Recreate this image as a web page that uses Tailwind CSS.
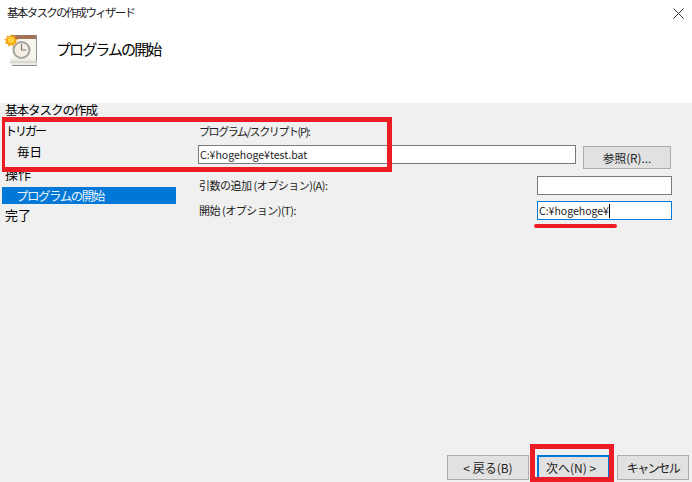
<!DOCTYPE html>
<html lang="ja">
<head>
    <meta charset="UTF-8">
    <title>基本タスクの作成ウィザード</title>
    <script src="https://cdn.jsdelivr.net/npm/@tailwindcss/browser@4"></script>
</head>
<body class="bg-[#f0f0f0] text-black font-['Noto_Sans_CJK_JP','Liberation_Sans',sans-serif]">
<div class="relative w-[692px] h-[482px] overflow-hidden flex flex-col">

    <!-- Header -->
    <header class="bg-white h-[103px] shrink-0">
        <div class="flex justify-between items-center h-[26px] pl-[7px] pr-[8px] text-[11.500px] tracking-[-1.700px] text-[#222]">
            <span>基本タスクの作成ウィザード</span>
            <svg class="w-[11px] h-[11px]" viewBox="0 0 11 11" stroke="#333" fill="none"><path d="M.5.5l10 10M10.5.5l-10 10"/></svg>
        </div>
        <div class="flex items-center pl-[4px] mt-[4px]">
            <!-- task icon: calendar page, clock, sun -->
            <svg class="w-[34px] h-[36px]" viewBox="0 0 34 36">
                <path d="M8 5h25v31H8z" fill="#8f8f8f"/>
                <path d="M6 29h26l1 6H6z" fill="#ecebe4"/>
                <path d="M6 32h26" stroke="#c4c4bc"/>
                <rect x="8" y="5" width="24" height="24" fill="#f8f5ea"/>
                <rect x="8" y="5" width="24" height="4" fill="#a0735a"/>
                <circle cx="17.500" cy="20" r="8" fill="#f5efe2" stroke="#a3a3a3" stroke-width="2"/>
                <path d="M17.500 14v6h5" fill="none" stroke="#7a7a7a" stroke-width="1.200"/>
                <path d="M7 4l1.600 2.500 2.900-1.200-.4 3.100 3 .8-2.400 2 1.500 2.700-3.100-.1-.7 3-2.400-2-2.400 2-.7-3-3.100.1 1.500-2.700-2.400-2 3-.8-.4-3.100 2.900 1.200z" fill="#f5a316"/>
                <circle cx="7" cy="10" r="3.200" fill="#ffd23c"/>
            </svg>
            <h1 class="ml-[18px] text-[15px] tracking-[-1.900px] leading-[22px] relative top-[1px]">プログラムの開始</h1>
        </div>
    </header>

    <!-- Body -->
    <main class="flex flex-1 min-h-0 text-[12.500px]">
        <nav class="w-[198px] shrink-0">
            <p class="pl-[5px] h-[14px] leading-[14px] tracking-[-1px]">基本タスクの作成</p>
            <p class="pl-[5px] mt-[6px] h-[16px] leading-[16px] text-[12px] tracking-[-2px]">トリガー</p>
            <p class="pl-[17px] mt-[5px] h-[16px] leading-[16px] text-[12.500px]">毎日</p>
            <p class="pl-[5px] mt-[4px] h-[19px] leading-[19px] text-[13px]">操作</p>
            <p class="ml-[2px] mt-[4px] w-[174px] pl-[14px] bg-[#0078d7] text-[#e8f2fb] h-[17px] leading-[17px] text-[12.500px] tracking-[-1.500px]">プログラムの開始</p>
            <p class="pl-[5px] mt-[2px] h-[18px] leading-[18px] text-[13px]">完了</p>
        </nav>

        <section class="flex-1 pt-[19px] text-[11px] tracking-[-.5px] text-[#222]">
            <label class="block pl-[1px] h-[18px] leading-[18px] text-[11px] tracking-[-1.400px]">プログラム/スクリプト(P):</label>
            <div class="flex items-start mt-[5px]">
                <input value="C:¥hogehoge¥test.bat" class="w-[378px] h-[19px] bg-white border border-[#7a7a7a] pl-[1px] text-[10.500px] tracking-normal outline-none">
                <button class="ml-[7px] w-[88px] h-[23px] mt-[1px] bg-[#e1e1e1] border border-[#adadad] text-[11.700px] tracking-normal">参照(R)...</button>
            </div>
            <div class="flex items-center mt-[7px]">
                <label class="w-[339px] pl-[1px]">引数の追加 (オプション)(A):</label>
                <input class="w-[135px] h-[19px] bg-white border border-[#7a7a7a] outline-none">
            </div>
            <div class="flex items-center mt-[6px]">
                <label class="w-[339px] pl-[1px]">開始 (オプション)(T):</label>
                <div class="w-[135px] h-[19px] flex items-center bg-white border border-[#0078d7] pl-[1px] text-[10.500px] tracking-normal">
                    <span>C:¥hogehoge¥</span>
                    <span class="inline-block w-[1px] h-[14px] bg-black shrink-0"></span>
                </div>
            </div>
        </section>
    </main>

    <!-- Footer buttons -->
    <footer class="flex items-start h-[27px] shrink-0 pl-[447px] text-[12px] text-[#222]">
        <button class="w-[82px] h-[25px] bg-[#e1e1e1] border border-[#adadad]">&lt; 戻る(B)</button>
        <button class="ml-[8px] w-[73px] h-[25px] bg-[#e1e1e1] border-2 border-[#0078d7] pr-[5px]">次へ(N) &gt;</button>
        <button class="ml-[7px] w-[72px] h-[25px] bg-[#e1e1e1] border border-[#adadad] text-[12px] tracking-[-1.500px]">キャンセル</button>
    </footer>

    <!-- Red annotations drawn over the screenshot -->
    <div class="absolute left-[2px] top-[117px] w-[390px] h-[55px] border-[5px] border-l-[3px] border-[#ed1c24]"></div>
    <div class="absolute left-[534px] top-[224px] w-[83px] h-[4px] rounded-full bg-[#ed1c24]"></div>
    <div class="absolute left-[530px] top-[444px] w-[84px] h-[38px] border-[5px] border-[#ed1c24]"></div>
</div>
</body>
</html>
